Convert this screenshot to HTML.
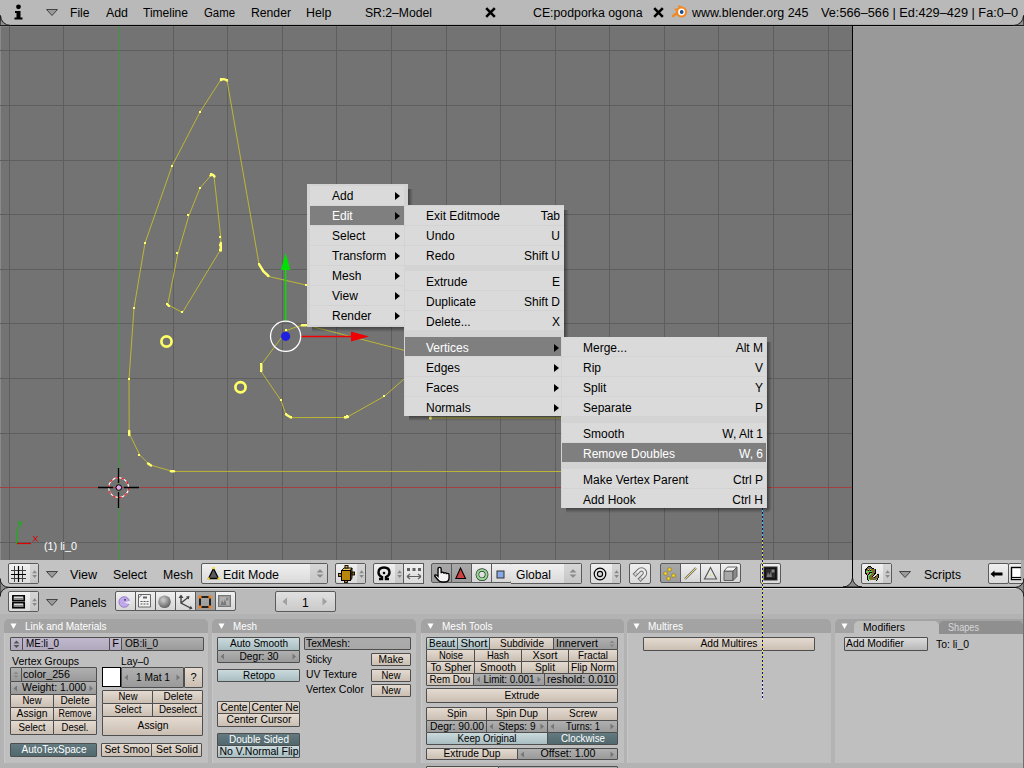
<!DOCTYPE html><html><head><meta charset="utf-8"><style>
html,body{margin:0;padding:0;width:1024px;height:768px;overflow:hidden;background:#b3b3b3}
body>div,body>span,body>svg{position:absolute}
span{font-family:"Liberation Sans",sans-serif;white-space:nowrap}
</style></head><body>
<div style="left:0px;top:0px;width:1024px;height:25px;background:#b9b9b9"></div>
<div style="left:0px;top:24px;width:1024px;height:1px;background:#a9a9a9"></div>
<div style="left:0px;top:25px;width:1024px;height:1px;background:#000"></div>
<svg style="left:14px;top:4px" width="10" height="16"><circle cx="4.5" cy="2.8" r="2.4" fill="#000"/><path d="M1 7 H6.5 V13.5 H8.5 V15.5 H0.5 V13.5 H2.5 V9 H1 Z" fill="#000"/></svg>
<svg style="left:46px;top:9px" width="12" height="7"><path d="M0.5 0.5 L11.5 0.5 L6.0 6.5 Z" fill="#9a9a9a" stroke="#444" stroke-width="1"/></svg>
<span style="transform:scaleX(1.0081);transform-origin:0 0;left:70px;top:7px;font-size:12px;line-height:12px;color:#000;">File</span>
<span style="transform:scaleX(1.0300);transform-origin:0 0;left:106px;top:7px;font-size:12px;line-height:12px;color:#000;">Add</span>
<span style="transform:scaleX(1.0021);transform-origin:0 0;left:143px;top:7px;font-size:12px;line-height:12px;color:#000;">Timeline</span>
<span style="transform:scaleX(0.9484);transform-origin:0 0;left:204px;top:7px;font-size:12px;line-height:12px;color:#000;">Game</span>
<span style="transform:scaleX(1.0163);transform-origin:0 0;left:251px;top:7px;font-size:12px;line-height:12px;color:#000;">Render</span>
<span style="transform:scaleX(1.0329);transform-origin:0 0;left:306px;top:7px;font-size:12px;line-height:12px;color:#000;">Help</span>
<span style="transform:scaleX(1.0144);transform-origin:0 0;left:365px;top:7px;font-size:12px;line-height:12px;color:#000;">SR:2&#8211;Model</span>
<span style="transform:scaleX(1.0258);transform-origin:0 0;left:533px;top:7px;font-size:12px;line-height:12px;color:#000;">CE:podporka ogona</span>
<span style="transform:scaleX(1.0395);transform-origin:0 0;left:692px;top:7px;font-size:12px;line-height:12px;color:#000;">www.blender.org 245</span>
<span style="transform:scaleX(1.0607);transform-origin:0 0;left:821px;top:7px;font-size:12px;line-height:12px;color:#000;">Ve:566&#8211;566 | Ed:429&#8211;429 | Fa:0&#8211;0</span>
<svg style="left:485px;top:7px" width="11" height="11"><path d="M1.2 1.2 L9.8 9.8 M9.8 1.2 L1.2 9.8" stroke="#000" stroke-width="2.6"/></svg>
<svg style="left:653px;top:7px" width="11" height="11"><path d="M1.2 1.2 L9.8 9.8 M9.8 1.2 L1.2 9.8" stroke="#000" stroke-width="2.6"/></svg>
<svg style="left:671px;top:4px" width="18" height="16"><g stroke="#f08a24" stroke-linecap="round" fill="none"><path d="M2 12 L7.5 8" stroke-width="2.6"/><path d="M4.5 5.5 H9" stroke-width="2.2"/><path d="M8 2.5 L11.5 4" stroke-width="2.2"/></g><circle cx="10.5" cy="8" r="5.6" fill="#f08a24"/><circle cx="10.5" cy="8" r="3.4" fill="#fff"/><circle cx="10.7" cy="8" r="1.9" fill="#1a4c98"/></svg>
<svg style="left:0;top:26px" width="853" height="534" viewBox="0 26 853 534">
<rect x="0" y="26" width="853" height="534" fill="#737373"/>
<rect x="0" y="26" width="853" height="1" fill="#838383"/>
<rect x="0" y="26" width="1" height="534" fill="#8a8a8a"/>
<path d="M9.5 26V560 M63.5 26V560 M173.5 26V560 M227.5 26V560 M282.5 26V560 M336.5 26V560 M391.5 26V560 M446.5 26V560 M500.5 26V560 M555.5 26V560 M609.5 26V560 M664.5 26V560 M718.5 26V560 M773.5 26V560 M828.5 26V560 M0 50.5H852 M0 105.5H852 M0 160.5H852 M0 214.5H852 M0 269.5H852 M0 323.5H852 M0 378.5H852 M0 433.5H852 M0 542.5H852" stroke="#5e5e5e" stroke-width="1" fill="none" shape-rendering="crispEdges"/>
<path d="M118.5 26V560" stroke="#3a9a3a" shape-rendering="crispEdges"/>
<path d="M0 487.5H852" stroke="#a04040" shape-rendering="crispEdges"/>
<g fill="none" stroke="#bdb634" stroke-width="1">
<path d="M562.0 471.5 L172.6 471.4 L149.6 464.8 L139.8 455.0 L129.2 433.4 L129.0 379.0 L134.0 308.0 L145.0 243.0 L172.0 166.0 L200.0 112.0 L221.0 79.5 L227.0 80.3 L259.0 264.0 L263.8 271.7 L268.4 276.4 L306.0 285.0 L420.0 313.0"/><path d="M214.0 176.0 L220.8 237.3 L220.8 245.0 L220.0 250.6 L182.5 312.5 L167.7 304.7 L177.8 253.8 L188.8 215.8 L200.0 188.0 L211.4 174.8 L214.0 176.0"/><path d="M420.0 372.0 L404.0 379.0 L384.7 396.0 L347.6 416.9 L345.3 417.5 L291.0 417.6 L286.0 414.8 L281.2 400.8 L261.2 371.5 L261.2 364.8 L286.7 330.5 L296.0 327.0 L305.0 325.0 L330.0 325.0"/><path d="M310.0 326.0 L403.0 350.0 L420.0 355.0"/><path d="M430.8 418.0 L565.0 418.0"/>
</g>
<g fill="#ffff70" shape-rendering="crispEdges"><rect x="171" y="470" width="2" height="2"/><rect x="148" y="463" width="2" height="2"/><rect x="138" y="454" width="2" height="2"/><rect x="128" y="432" width="2" height="2"/><rect x="128" y="378" width="2" height="2"/><rect x="133" y="307" width="2" height="2"/><rect x="144" y="242" width="2" height="2"/><rect x="171" y="165" width="2" height="2"/><rect x="199" y="111" width="2" height="2"/><rect x="220" y="78" width="2" height="2"/><rect x="226" y="79" width="2" height="2"/><rect x="258" y="263" width="2" height="2"/><rect x="262" y="270" width="2" height="2"/><rect x="267" y="275" width="2" height="2"/><rect x="305" y="284" width="2" height="2"/><rect x="219" y="236" width="2" height="2"/><rect x="219" y="244" width="2" height="2"/><rect x="219" y="249" width="2" height="2"/><rect x="181" y="311" width="2" height="2"/><rect x="166" y="303" width="2" height="2"/><rect x="176" y="252" width="2" height="2"/><rect x="187" y="214" width="2" height="2"/><rect x="199" y="187" width="2" height="2"/><rect x="210" y="173" width="2" height="2"/><rect x="213" y="175" width="2" height="2"/><rect x="383" y="395" width="2" height="2"/><rect x="346" y="415" width="2" height="2"/><rect x="344" y="416" width="2" height="2"/><rect x="290" y="416" width="2" height="2"/><rect x="285" y="413" width="2" height="2"/><rect x="280" y="399" width="2" height="2"/><rect x="260" y="370" width="2" height="2"/><rect x="260" y="363" width="2" height="2"/><rect x="285" y="329" width="2" height="2"/><rect x="302" y="324" width="2" height="2"/><rect x="305" y="324" width="2" height="2"/><rect x="429" y="417" width="2" height="2"/></g>
<g fill="none" stroke="#ffff70" stroke-width="2.4" stroke-linecap="round">
<path d="M221 80 Q224 78 227 80.5"/><path d="M210.5 175.5 Q212.5 173.5 214.5 176.5"/>
<path d="M259.5 265 L263.5 271.5 L268.5 276"/><path d="M220.8 243 V250.5"/>
<path d="M129.2 431 V435"/><path d="M148 463.5 L151 465.5"/><path d="M171 471.3 H174"/>
<path d="M261.3 364.5 V371"/><path d="M286 414.5 L291 417.6"/><path d="M345 417.5 L348 416.8"/>
<path d="M302 325.3 H306"/><path d="M430.5 417.5 V418.5"/><path d="M167.5 304.5 L169 306"/>
</g>
<circle cx="166.5" cy="341.5" r="5.1" fill="none" stroke="#ffff66" stroke-width="2.7"/>
<circle cx="240.5" cy="387.3" r="5.1" fill="none" stroke="#ffff66" stroke-width="2.7"/>
<!-- manipulator -->
<path d="M285.6 321V268" stroke="#00e000" stroke-width="1.6"/>
<path d="M280.8 270 L285.6 253 L290.4 270 Z" fill="#00e000"/>
<path d="M301 336.5H352" stroke="#f00000" stroke-width="1.6"/>
<path d="M351 331.5 L369 336.5 L351 341.5 Z" fill="#f00000"/>
<circle cx="285.6" cy="336.3" r="15.1" fill="none" stroke="#fff" stroke-width="1.3"/>
<circle cx="285.6" cy="336.3" r="4.6" fill="#2020e0"/>
<!-- 3d cursor -->
<circle cx="118.6" cy="487.6" r="10" fill="none" stroke="#fff" stroke-width="1.1"/>
<circle cx="118.6" cy="487.6" r="10" fill="none" stroke="#f01010" stroke-width="1.1" stroke-dasharray="3.1 3.1"/>
<path d="M118.5 468V483 M118.5 492V508 M98 487.5H113 M124 487.5H139" stroke="#000" stroke-width="1.3"/>
<circle cx="118.8" cy="487.6" r="2.8" fill="#e0a8e8" stroke="#000" stroke-width="1"/>
<!-- axis widget -->
<path d="M16.5 529V543.5H31" fill="none" stroke="#00c000" stroke-width="1"/>
<path d="M17 543.5H31" stroke="#e00000" stroke-width="1.2"/>
<path d="M18 521 L20 525 M22 521 L18.5 529" stroke="#00c000" stroke-width="1"/>
<path d="M33 536 L37.5 541.5 M37.5 536 L33 541.5" stroke="#e00000" stroke-width="1"/>
<!-- dotted line -->

</svg>
<span style="transform:scaleX(0.9814);transform-origin:0 0;left:44px;top:541px;font-size:11px;line-height:11px;color:#fff;">(1) li_0</span>
<div style="left:852px;top:26px;width:1px;height:534px;background:#000"></div>
<div style="left:853px;top:26px;width:171px;height:534px;background:#999999"></div>
<div style="left:853px;top:26px;width:171px;height:1px;background:#a6a6a6"></div>
<div style="left:0px;top:560px;width:852px;height:27px;background:#c3c3c3"></div>
<div style="left:853px;top:560px;width:171px;height:27px;background:#c3c3c3"></div>
<div style="left:0px;top:586px;width:1024px;height:1px;background:#a8a8a8"></div>
<div style="left:852px;top:560px;width:1px;height:27px;background:#000"></div>
<div style="left:0px;top:587px;width:1024px;height:1px;background:#000"></div>
<div style="left:0px;top:588px;width:1024px;height:26px;background:#bababa"></div>
<div style="left:0px;top:588px;width:1024px;height:1px;background:#dcdcdc"></div>
<div style="left:0px;top:614px;width:1024px;height:154px;background:#b3b3b3"></div>
<div style="left:8px;top:563px;width:29px;height:19px;border:1px solid #5a5a5a;border-radius:2px;background:linear-gradient(#f2f2f2,#dcdcdc);"></div>
<div style="left:30px;top:564px;width:8px;height:19px;background:linear-gradient(#d6d6d6,#c4c4c4)"></div>
<svg style="left:11px;top:566px" width="16" height="16"><path d="M3.5 0V16 M11.5 0V16 M0 4.5H15 M0 12.5H15" stroke="#404040" stroke-width="1"/><path d="M7.5 0V16 M0 8.5H15" stroke="#000" stroke-width="1.2"/></svg>
<svg style="left:32px;top:570px" width="6" height="9"><path d="M0.2 3.2 L2.6 0.2 L5 3.2 Z M0.2 5 L2.6 8 L5 5 Z" fill="#8a8a8a"/></svg>
<svg style="left:46px;top:571px" width="12" height="7"><path d="M0.5 0.5 L11.5 0.5 L6.0 6.5 Z" fill="#9a9a9a" stroke="#444" stroke-width="1"/></svg>
<span style="transform:scaleX(1.0466);transform-origin:0 0;left:70px;top:569px;font-size:12px;line-height:12px;color:#000;">View</span>
<span style="transform:scaleX(1.0192);transform-origin:0 0;left:113px;top:569px;font-size:12px;line-height:12px;color:#000;">Select</span>
<span style="transform:scaleX(1.0224);transform-origin:0 0;left:163px;top:569px;font-size:12px;line-height:12px;color:#000;">Mesh</span>
<div style="left:201px;top:563px;width:125px;height:19px;border:1px solid #5a5a5a;border-radius:2px;background:linear-gradient(#f0f0f0,#dadada);"></div>
<div style="left:310px;top:564px;width:17px;height:19px;background:linear-gradient(#d6d6d6,#c6c6c6)"></div>
<svg style="left:316px;top:569px" width="9" height="10"><path d="M0.5 3.5 L4 0.2 L7.5 3.5 Z M0.5 5.5 L4 8.8 L7.5 5.5 Z" fill="#8a8a8a"/></svg>
<svg style="left:207px;top:567px" width="14" height="14"><path d="M6.5 1.5 L1.5 11.5 H11.5 Z" fill="#5a5a5a" stroke="#000" stroke-width="1.3"/><rect x="5.5" y="0" width="2.2" height="2.2" fill="#ffe020"/><rect x="0.5" y="10.5" width="2.2" height="2.2" fill="#ffe020"/><rect x="10.5" y="10.5" width="2.2" height="2.2" fill="#ffe020"/></svg>
<span style="transform:scaleX(1.0364);transform-origin:0 0;left:223px;top:569px;font-size:12px;line-height:12px;color:#000;">Edit Mode</span>
<div style="left:335px;top:563px;width:29px;height:19px;border:1px solid #5a5a5a;border-radius:2px;background:linear-gradient(#f0f0f0,#dadada);"></div>
<div style="left:357px;top:564px;width:8px;height:19px;background:linear-gradient(#d6d6d6,#c6c6c6)"></div>
<svg style="left:359px;top:570px" width="6" height="9"><path d="M0.2 3.2 L2.6 0.2 L5 3.2 Z M0.2 5 L2.6 8 L5 5 Z" fill="#8a8a8a"/></svg>
<svg style="left:338px;top:565px" width="17" height="18"><path d="M3.5 5.5 L6 3 H14 L12.5 5.5 Z" fill="#f0d070" stroke="#000" stroke-width="0.9"/><path d="M12.5 5.5 L14 3 V13 L12.5 15.5 Z" fill="#8a6008" stroke="#000" stroke-width="0.9"/><rect x="3.5" y="5.5" width="9" height="10" fill="#b8860b" stroke="#000" stroke-width="1"/><rect x="7" y="0.5" width="3" height="2.5" fill="#e0b040" stroke="#000" stroke-width="0.9"/><rect x="0.5" y="8.5" width="3" height="3" fill="#b8860b" stroke="#000" stroke-width="0.9"/><rect x="14" y="7" width="2.5" height="3" fill="#8a6008" stroke="#000" stroke-width="0.9"/><rect x="6.5" y="15.5" width="3" height="2" fill="#b8860b" stroke="#000" stroke-width="0.9"/></svg>
<div style="left:373px;top:563px;width:29px;height:19px;border:1px solid #5a5a5a;border-radius:2px;background:linear-gradient(#f0f0f0,#dadada);"></div>
<div style="left:395px;top:564px;width:8px;height:19px;background:linear-gradient(#d6d6d6,#c6c6c6)"></div>
<svg style="left:397px;top:570px" width="6" height="9"><path d="M0.2 3.2 L2.6 0.2 L5 3.2 Z M0.2 5 L2.6 8 L5 5 Z" fill="#8a8a8a"/></svg>
<svg style="left:376px;top:566px" width="16" height="15"><path d="M3 13 H6 V11 Q2.5 9.5 2.5 6.5 Q2.5 1.5 8 1.5 Q13.5 1.5 13.5 6.5 Q13.5 9.5 10 11 V13 H13" fill="none" stroke="#000" stroke-width="2.4"/><circle cx="8" cy="7" r="1.3" fill="#000"/></svg>
<div style="left:403px;top:563px;width:19px;height:19px;border:1px solid #5a5a5a;border-radius:0px;background:linear-gradient(#f0f0f0,#dadada);"></div>
<svg style="left:405px;top:566px" width="18" height="15"><path d="M2 2h3v3h-3z M7.5 2h3v3h-3z M13 2h3v3h-3z" fill="#606060"/><path d="M2 10.5H16 M2 10.5 L5 8 M2 10.5 L5 13 M16 10.5 L13 8 M16 10.5 L13 13" stroke="#606060" stroke-width="1.2" fill="none"/></svg>
<div style="left:431px;top:563px;width:19px;height:18px;border:1px solid #5a5a5a;background:linear-gradient(#a8a8a8,#9c9c9c);border-radius:2px 0 0 2px;"></div>
<div style="left:451px;top:563px;width:19px;height:18px;border:1px solid #5a5a5a;background:linear-gradient(#a8a8a8,#9c9c9c);"></div>
<div style="left:471px;top:563px;width:19px;height:18px;border:1px solid #5a5a5a;background:linear-gradient(#f0f0f0,#d6d6d6);"></div>
<div style="left:491px;top:563px;width:19px;height:18px;border:1px solid #5a5a5a;background:linear-gradient(#f0f0f0,#d6d6d6);border-radius:0 2px 2px 0;"></div>
<svg style="left:433px;top:566px" width="18" height="18"><g transform="translate(0.3 0.3) scale(1.05)"><path d="M4.5 9 V2.5 Q4.5 1 6 1 Q7.5 1 7.5 2.5 V6.5 Q7.5 5.5 8.7 5.5 Q10 5.5 10 6.5 V7 Q10 6 11.2 6 Q12.5 6 12.5 7 V7.5 Q12.5 6.8 13.6 6.8 Q15 6.8 15 8 V11 Q15 15 11 15 H8.5 Q6.5 15 5 13.5 L1.5 9.5 Q1 8.5 2 8.2 Q3 8 4.5 9.5 Z" fill="#f4f4f4" stroke="#000" stroke-width="1.3"/></g></svg>
<svg style="left:455px;top:567px" width="12" height="13"><path d="M5.5 1 L10.5 11.5 H0.8 Z" fill="#d04040" stroke="#000" stroke-width="1.1"/></svg>
<svg style="left:475px;top:568px" width="14" height="14"><circle cx="7" cy="6.6" r="4.6" fill="none" stroke="#303030" stroke-width="3.6"/><circle cx="7" cy="6.6" r="4.6" fill="none" stroke="#90d890" stroke-width="2.2"/></svg>
<svg style="left:496px;top:570px" width="10" height="10"><rect x="1" y="1" width="7" height="7" fill="#88a8e8" stroke="#303030" stroke-width="1"/></svg>
<div style="left:511px;top:563px;width:70px;height:19px;border:1px solid #5a5a5a;border-left:0;border-radius:0 2px 2px 0;background:linear-gradient(#f0f0f0,#dadada)"></div>
<div style="left:564px;top:564px;width:17px;height:19px;background:linear-gradient(#d6d6d6,#c6c6c6)"></div>
<svg style="left:569px;top:569px" width="9" height="10"><path d="M0.5 3.5 L4 0.2 L7.5 3.5 Z M0.5 5.5 L4 8.8 L7.5 5.5 Z" fill="#8a8a8a"/></svg>
<span style="transform:scaleX(1.0090);transform-origin:0 0;left:516px;top:569px;font-size:12px;line-height:12px;color:#000;">Global</span>
<div style="left:590px;top:563px;width:29px;height:19px;border:1px solid #5a5a5a;border-radius:2px;background:linear-gradient(#f0f0f0,#dadada);"></div>
<div style="left:612px;top:564px;width:8px;height:19px;background:linear-gradient(#d6d6d6,#c6c6c6)"></div>
<svg style="left:614px;top:570px" width="6" height="9"><path d="M0.2 3.2 L2.6 0.2 L5 3.2 Z M0.2 5 L2.6 8 L5 5 Z" fill="#8a8a8a"/></svg>
<svg style="left:592px;top:566px" width="17" height="17"><circle cx="8" cy="8" r="5.8" fill="none" stroke="#000" stroke-width="1.2"/><circle cx="8" cy="8" r="2.6" fill="#d8d8d8" stroke="#000" stroke-width="1.1"/></svg>
<div style="left:629px;top:563px;width:20px;height:19px;border:1px solid #5a5a5a;border-radius:2px;background:linear-gradient(#f0f0f0,#dadada);"></div>
<svg style="left:632px;top:566px" width="17" height="17"><g transform="translate(9.5 7) rotate(45)"><path d="M-3.5 7 V0 A3.5 3.5 0 0 1 3.5 0 V7" fill="none" stroke="#707070" stroke-width="4.4"/><path d="M-3.5 6.4 V0 A3.5 3.5 0 0 1 3.5 0 V6.4" fill="none" stroke="#ececec" stroke-width="2.4"/><path d="M-3.5 3.5 V6.4 M3.5 3.5 V6.4" stroke="#a0a0a0" stroke-width="2.4" stroke-dasharray="1 1"/></g></svg>
<div style="left:660px;top:563px;width:19px;height:18px;border:1px solid #5a5a5a;background:linear-gradient(#a8a8a8,#9c9c9c);border-radius:2px 0 0 2px;"></div>
<div style="left:680px;top:563px;width:19px;height:18px;border:1px solid #5a5a5a;background:linear-gradient(#f0f0f0,#d6d6d6);"></div>
<div style="left:700px;top:563px;width:19px;height:18px;border:1px solid #5a5a5a;background:linear-gradient(#f0f0f0,#d6d6d6);"></div>
<div style="left:720px;top:563px;width:19px;height:18px;border:1px solid #5a5a5a;background:linear-gradient(#f0f0f0,#d6d6d6);border-radius:0 2px 2px 0;"></div>
<svg style="left:663px;top:566px" width="15" height="15"><rect x="5" y="2" width="3" height="3" fill="#ffe020" stroke="#806a00" stroke-width="0.5"/><rect x="1" y="6" width="3" height="3" fill="#ffe020" stroke="#806a00" stroke-width="0.5"/><rect x="9" y="8" width="3" height="3" fill="#ffe020" stroke="#806a00" stroke-width="0.5"/><rect x="4" y="11" width="3" height="3" fill="#ffe020" stroke="#806a00" stroke-width="0.5"/></svg>
<svg style="left:683px;top:566px" width="15" height="15"><path d="M2 13 L13 2" stroke="#777" stroke-width="2.4"/><path d="M2 13 L13 2" stroke="#e8d860" stroke-width="1"/></svg>
<svg style="left:703px;top:566px" width="15" height="15"><path d="M7.5 1.5 L13.5 13 H1.5 Z" fill="none" stroke="#555" stroke-width="1.1"/><circle cx="7.5" cy="9" r="0.8" fill="#dddd40"/></svg>
<svg style="left:722px;top:565px" width="17" height="17"><path d="M2 6 H11 V15.5 H2 Z" fill="#a8a8a8" stroke="#555" stroke-width="0.9"/><path d="M2 6 L5.5 2 H15 L11 6 Z" fill="#f4f4f4" stroke="#555" stroke-width="0.9"/><path d="M11 6 L15 2 V11.5 L11 15.5 Z" fill="#8a8a8a" stroke="#555" stroke-width="0.9"/></svg>
<div style="left:760px;top:563px;width:19px;height:19px;border:1px solid #5a5a5a;border-radius:2px;background:linear-gradient(#f0f0f0,#dadada);"></div>
<svg style="left:763px;top:566px" width="15" height="15"><rect x="1" y="1" width="13" height="13" fill="#111" stroke="#333"/><rect x="3" y="3" width="9" height="9" fill="#2a2a2a"/><path d="M3.5 11 L5 6 L6.5 9 L8 5 L9 11 Z" fill="#777"/><rect x="8.5" y="3.5" width="3" height="3" fill="#888"/></svg>
<div style="left:861px;top:563px;width:29px;height:19px;border:1px solid #5a5a5a;border-radius:2px;background:linear-gradient(#f0f0f0,#dadada);"></div>
<div style="left:883px;top:564px;width:8px;height:19px;background:linear-gradient(#d6d6d6,#c6c6c6)"></div>
<svg style="left:885px;top:570px" width="6" height="9"><path d="M0.2 3.2 L2.6 0.2 L5 3.2 Z M0.2 5 L2.6 8 L5 5 Z" fill="#8a8a8a"/></svg>
<svg style="left:865px;top:566px" width="14" height="15" shape-rendering="crispEdges"><rect x="3" y="0" width="1" height="1" fill="#000"/><rect x="4" y="0" width="1" height="1" fill="#000"/><rect x="5" y="0" width="1" height="1" fill="#000"/><rect x="2" y="1" width="1" height="1" fill="#000"/><rect x="3" y="1" width="1" height="1" fill="#7a6a30"/><rect x="4" y="1" width="1" height="1" fill="#7a6a30"/><rect x="5" y="1" width="1" height="1" fill="#7a6a30"/><rect x="6" y="1" width="1" height="1" fill="#000"/><rect x="1" y="2" width="1" height="1" fill="#000"/><rect x="2" y="2" width="1" height="1" fill="#7a6a30"/><rect x="3" y="2" width="1" height="1" fill="#4848c8"/><rect x="4" y="2" width="1" height="1" fill="#7a6a30"/><rect x="5" y="2" width="1" height="1" fill="#4848c8"/><rect x="6" y="2" width="1" height="1" fill="#7a6a30"/><rect x="7" y="2" width="1" height="1" fill="#000"/><rect x="8" y="2" width="1" height="1" fill="#000"/><rect x="0" y="3" width="1" height="1" fill="#000"/><rect x="1" y="3" width="1" height="1" fill="#000"/><rect x="2" y="3" width="1" height="1" fill="#7a6a30"/><rect x="3" y="3" width="1" height="1" fill="#e8e040"/><rect x="4" y="3" width="1" height="1" fill="#7a6a30"/><rect x="5" y="3" width="1" height="1" fill="#e8e040"/><rect x="6" y="3" width="1" height="1" fill="#7a6a30"/><rect x="7" y="3" width="1" height="1" fill="#7a6a30"/><rect x="8" y="3" width="1" height="1" fill="#7a6a30"/><rect x="9" y="3" width="1" height="1" fill="#7a6a30"/><rect x="10" y="3" width="1" height="1" fill="#000"/><rect x="0" y="4" width="1" height="1" fill="#000"/><rect x="1" y="4" width="1" height="1" fill="#7a6a30"/><rect x="2" y="4" width="1" height="1" fill="#7a6a30"/><rect x="3" y="4" width="1" height="1" fill="#000"/><rect x="4" y="4" width="1" height="1" fill="#7a6a30"/><rect x="5" y="4" width="1" height="1" fill="#000"/><rect x="6" y="4" width="1" height="1" fill="#7a6a30"/><rect x="7" y="4" width="1" height="1" fill="#7a6a30"/><rect x="8" y="4" width="1" height="1" fill="#7a6a30"/><rect x="9" y="4" width="1" height="1" fill="#7a6a30"/><rect x="10" y="4" width="1" height="1" fill="#000"/><rect x="0" y="5" width="1" height="1" fill="#000"/><rect x="1" y="5" width="1" height="1" fill="#60d060"/><rect x="2" y="5" width="1" height="1" fill="#60d060"/><rect x="3" y="5" width="1" height="1" fill="#60d060"/><rect x="4" y="5" width="1" height="1" fill="#60d060"/><rect x="5" y="5" width="1" height="1" fill="#60d060"/><rect x="6" y="5" width="1" height="1" fill="#60d060"/><rect x="7" y="5" width="1" height="1" fill="#7a6a30"/><rect x="8" y="5" width="1" height="1" fill="#7a6a30"/><rect x="9" y="5" width="1" height="1" fill="#7a6a30"/><rect x="10" y="5" width="1" height="1" fill="#000"/><rect x="0" y="6" width="1" height="1" fill="#000"/><rect x="1" y="6" width="1" height="1" fill="#60d060"/><rect x="2" y="6" width="1" height="1" fill="#60d060"/><rect x="3" y="6" width="1" height="1" fill="#e06060"/><rect x="4" y="6" width="1" height="1" fill="#000"/><rect x="5" y="6" width="1" height="1" fill="#000"/><rect x="6" y="6" width="1" height="1" fill="#000"/><rect x="7" y="6" width="1" height="1" fill="#7a6a30"/><rect x="8" y="6" width="1" height="1" fill="#7a6a30"/><rect x="9" y="6" width="1" height="1" fill="#7a6a30"/><rect x="10" y="6" width="1" height="1" fill="#000"/><rect x="0" y="7" width="1" height="1" fill="#000"/><rect x="1" y="7" width="1" height="1" fill="#000"/><rect x="2" y="7" width="1" height="1" fill="#e06060"/><rect x="3" y="7" width="1" height="1" fill="#e06060"/><rect x="4" y="7" width="1" height="1" fill="#000"/><rect x="5" y="7" width="1" height="1" fill="#60d060"/><rect x="6" y="7" width="1" height="1" fill="#60d060"/><rect x="7" y="7" width="1" height="1" fill="#7a6a30"/><rect x="8" y="7" width="1" height="1" fill="#7a6a30"/><rect x="9" y="7" width="1" height="1" fill="#000"/><rect x="10" y="7" width="1" height="1" fill="#000"/><rect x="1" y="8" width="1" height="1" fill="#000"/><rect x="2" y="8" width="1" height="1" fill="#e06060"/><rect x="3" y="8" width="1" height="1" fill="#000"/><rect x="4" y="8" width="1" height="1" fill="#60d060"/><rect x="5" y="8" width="1" height="1" fill="#60d060"/><rect x="6" y="8" width="1" height="1" fill="#7a6a30"/><rect x="7" y="8" width="1" height="1" fill="#7a6a30"/><rect x="8" y="8" width="1" height="1" fill="#7a6a30"/><rect x="9" y="8" width="1" height="1" fill="#000"/><rect x="12" y="8" width="1" height="1" fill="#000"/><rect x="13" y="8" width="1" height="1" fill="#000"/><rect x="2" y="9" width="1" height="1" fill="#000"/><rect x="3" y="9" width="1" height="1" fill="#60d060"/><rect x="4" y="9" width="1" height="1" fill="#60d060"/><rect x="5" y="9" width="1" height="1" fill="#7a6a30"/><rect x="6" y="9" width="1" height="1" fill="#7a6a30"/><rect x="7" y="9" width="1" height="1" fill="#7a6a30"/><rect x="8" y="9" width="1" height="1" fill="#000"/><rect x="11" y="9" width="1" height="1" fill="#7a6a30"/><rect x="12" y="9" width="1" height="1" fill="#7a6a30"/><rect x="13" y="9" width="1" height="1" fill="#000"/><rect x="2" y="10" width="1" height="1" fill="#000"/><rect x="3" y="10" width="1" height="1" fill="#60d060"/><rect x="4" y="10" width="1" height="1" fill="#7a6a30"/><rect x="5" y="10" width="1" height="1" fill="#7a6a30"/><rect x="6" y="10" width="1" height="1" fill="#7a6a30"/><rect x="7" y="10" width="1" height="1" fill="#000"/><rect x="10" y="10" width="1" height="1" fill="#000"/><rect x="11" y="10" width="1" height="1" fill="#7a6a30"/><rect x="12" y="10" width="1" height="1" fill="#7a6a30"/><rect x="13" y="10" width="1" height="1" fill="#000"/><rect x="2" y="11" width="1" height="1" fill="#000"/><rect x="3" y="11" width="1" height="1" fill="#60d060"/><rect x="4" y="11" width="1" height="1" fill="#7a6a30"/><rect x="5" y="11" width="1" height="1" fill="#7a6a30"/><rect x="6" y="11" width="1" height="1" fill="#7a6a30"/><rect x="7" y="11" width="1" height="1" fill="#7a6a30"/><rect x="8" y="11" width="1" height="1" fill="#7a6a30"/><rect x="9" y="11" width="1" height="1" fill="#000"/><rect x="10" y="11" width="1" height="1" fill="#7a6a30"/><rect x="11" y="11" width="1" height="1" fill="#7a6a30"/><rect x="12" y="11" width="1" height="1" fill="#7a6a30"/><rect x="13" y="11" width="1" height="1" fill="#000"/><rect x="2" y="12" width="1" height="1" fill="#000"/><rect x="3" y="12" width="1" height="1" fill="#60d060"/><rect x="4" y="12" width="1" height="1" fill="#7a6a30"/><rect x="5" y="12" width="1" height="1" fill="#7a6a30"/><rect x="6" y="12" width="1" height="1" fill="#7a6a30"/><rect x="7" y="12" width="1" height="1" fill="#7a6a30"/><rect x="8" y="12" width="1" height="1" fill="#7a6a30"/><rect x="9" y="12" width="1" height="1" fill="#7a6a30"/><rect x="10" y="12" width="1" height="1" fill="#7a6a30"/><rect x="11" y="12" width="1" height="1" fill="#7a6a30"/><rect x="12" y="12" width="1" height="1" fill="#000"/><rect x="2" y="13" width="1" height="1" fill="#000"/><rect x="3" y="13" width="1" height="1" fill="#60d060"/><rect x="4" y="13" width="1" height="1" fill="#60d060"/><rect x="5" y="13" width="1" height="1" fill="#7a6a30"/><rect x="6" y="13" width="1" height="1" fill="#7a6a30"/><rect x="7" y="13" width="1" height="1" fill="#7a6a30"/><rect x="8" y="13" width="1" height="1" fill="#7a6a30"/><rect x="9" y="13" width="1" height="1" fill="#7a6a30"/><rect x="10" y="13" width="1" height="1" fill="#7a6a30"/><rect x="11" y="13" width="1" height="1" fill="#60d060"/><rect x="12" y="13" width="1" height="1" fill="#000"/><rect x="3" y="14" width="1" height="1" fill="#000"/><rect x="11" y="14" width="1" height="1" fill="#000"/></svg>
<svg style="left:899px;top:571px" width="12" height="7"><path d="M0.5 0.5 L11.5 0.5 L6.0 6.5 Z" fill="#9a9a9a" stroke="#444" stroke-width="1"/></svg>
<span style="transform:scaleX(1.0085);transform-origin:0 0;left:924px;top:569px;font-size:12px;line-height:12px;color:#000;">Scripts</span>
<div style="left:988px;top:563px;width:19px;height:19px;border:1px solid #5a5a5a;border-radius:2px;background:linear-gradient(#f0f0f0,#dadada);"></div>
<svg style="left:990px;top:570px" width="13" height="9"><path d="M0.5 4 L4.5 0.5 V2.5 H12.5 V5.5 H4.5 V7.5 Z" fill="#000"/></svg>
<div style="left:1008px;top:563px;width:20px;height:19px;border:1px solid #5a5a5a;border-radius:2px;background:linear-gradient(#f0f0f0,#dadada);"></div>
<svg style="left:1010px;top:566px" width="12" height="16"><rect x="1.5" y="1.5" width="10" height="12" fill="#fff" stroke="#000" stroke-width="1.4"/><path d="M1 11.5H12" stroke="#000" stroke-width="1.2"/><path d="M2 12.5H12" stroke="#ddd" stroke-width="0.8"/></svg>
<div style="left:1021px;top:560px;width:3px;height:20px;background:#a9a9a9"></div>
<div style="left:8px;top:591px;width:29px;height:19px;border:1px solid #5a5a5a;border-radius:2px;background:linear-gradient(#f2f2f2,#dcdcdc);"></div>
<div style="left:30px;top:592px;width:8px;height:19px;background:linear-gradient(#d6d6d6,#c4c4c4)"></div>
<svg style="left:12px;top:595px" width="14" height="14"><rect x="0.8" y="0.8" width="11.5" height="5" fill="#888" stroke="#000" stroke-width="1.5"/><rect x="0.8" y="7.8" width="11.5" height="5" fill="#888" stroke="#000" stroke-width="1.5"/><path d="M2 2.2H11 M2 9.2H11" stroke="#fff" stroke-width="1"/></svg>
<svg style="left:32px;top:598px" width="6" height="9"><path d="M0.2 3.2 L2.6 0.2 L5 3.2 Z M0.2 5 L2.6 8 L5 5 Z" fill="#8a8a8a"/></svg>
<svg style="left:46px;top:599px" width="12" height="7"><path d="M0.5 0.5 L11.5 0.5 L6.0 6.5 Z" fill="#9a9a9a" stroke="#444" stroke-width="1"/></svg>
<span style="transform:scaleX(0.9945);transform-origin:0 0;left:70px;top:597px;font-size:12px;line-height:12px;color:#000;">Panels</span>
<div style="left:115px;top:591px;width:19px;height:18px;border:1px solid #5a5a5a;background:linear-gradient(#f0f0f0,#d6d6d6);border-radius:2px 0 0 2px;"></div>
<div style="left:135px;top:591px;width:19px;height:18px;border:1px solid #5a5a5a;background:linear-gradient(#f0f0f0,#d6d6d6);"></div>
<div style="left:155px;top:591px;width:19px;height:18px;border:1px solid #5a5a5a;background:linear-gradient(#f0f0f0,#d6d6d6);"></div>
<div style="left:175px;top:591px;width:19px;height:18px;border:1px solid #5a5a5a;background:linear-gradient(#f0f0f0,#d6d6d6);"></div>
<div style="left:195px;top:591px;width:19px;height:18px;border:1px solid #5a5a5a;background:linear-gradient(#a8a8a8,#9c9c9c);"></div>
<div style="left:215px;top:591px;width:19px;height:18px;border:1px solid #5a5a5a;background:linear-gradient(#f0f0f0,#d6d6d6);border-radius:0 2px 2px 0;"></div>
<svg style="left:118px;top:596px" width="13" height="12"><circle cx="6.2" cy="6" r="5.3" fill="#c0a8ec" stroke="#8a70b8" stroke-width="0.8"/><path d="M6.5 6.5 L12.5 4.5 V8.5 Z" fill="#eaeaea"/><circle cx="7" cy="3.8" r="0.9" fill="#333"/></svg>
<svg style="left:138px;top:594px" width="14" height="14"><path d="M0.5 0.5 H12.5 V13 H0.5 Z" fill="#f2f2f2" stroke="#666" stroke-width="1"/><path d="M0.5 4 L4 0.5" stroke="#666"/><path d="M2.5 7.5H11 M2.5 10H11" stroke="#555" stroke-width="1" stroke-dasharray="2 1"/><rect x="5" y="2.5" width="4" height="2" fill="#666"/></svg>
<svg style="left:157px;top:594px" width="15" height="15"><defs><radialGradient id="sph" cx="0.4" cy="0.35" r="0.7"><stop offset="0" stop-color="#d0d0d0"/><stop offset="0.6" stop-color="#8a8a8a"/><stop offset="1" stop-color="#5a5a5a"/></radialGradient></defs><circle cx="7.5" cy="7.8" r="6.3" fill="url(#sph)"/></svg>
<svg style="left:177px;top:594px" width="16" height="16"><path d="M4 2 V9 L14.5 14.5 M4 9 L11 3.5" fill="none" stroke="#444" stroke-width="1.4"/><path d="M1.5 4 L4 0.5 L6.5 4 Z M9 2.5 L12.5 2 L11.8 5.5 Z M12 15.5 L15.5 14.8 L13.8 11.8 Z" fill="#444"/></svg>
<svg style="left:197px;top:594px" width="16" height="16"><rect x="3" y="3" width="10" height="10" fill="none" stroke="#000" stroke-width="1.6"/><rect x="1.5" y="1.5" width="3" height="3" fill="#f08020"/><rect x="11.5" y="1.5" width="3" height="3" fill="#f08020"/><rect x="1.5" y="11.5" width="3" height="3" fill="#f08020"/><rect x="11.5" y="11.5" width="3" height="3" fill="#f08020"/></svg>
<svg style="left:218px;top:595px" width="14" height="13"><rect x="0.5" y="0.5" width="12" height="11" fill="#9a9a9a" stroke="#777"/><rect x="2" y="2" width="9" height="8" fill="#b0b0b0"/><path d="M2.5 10 L4 5 L5.5 8 L7 4 L8.5 10 Z" fill="#7a7a7a"/><rect x="8" y="2.5" width="2.5" height="3" fill="#888"/></svg>
<div style="left:275px;top:591px;width:59px;height:19px;border:1px solid #5a5a5a;border-radius:2px;background:linear-gradient(#e0e0e0,#cacaca);"></div>
<svg style="left:282px;top:597px" width="6" height="9"><path d="M5 0.5 L0.5 4.5 L5 8.5 Z" fill="#a0a0a0"/></svg>
<svg style="left:322px;top:597px" width="6" height="9"><path d="M0.5 0.5 L5 4.5 L0.5 8.5 Z" fill="#a0a0a0"/></svg>
<span style="left:302px;top:597px;font-size:12px;line-height:12px;color:#000;">1</span>
<div style="left:1023px;top:588px;width:1px;height:180px;background:#6e6e6e"></div>
<div style="left:4px;top:619px;width:204px;height:14px;background:#a3a3a3;border-radius:5px 5px 0 0"></div>
<div style="left:4px;top:633px;width:204px;height:130px;background:#bfbfbf"></div>
<div style="left:4px;top:633px;width:1px;height:130px;background:#c8c8c8"></div>
<svg style="left:10px;top:623px" width="8" height="7"><path d="M0.5 0.5 H6.5 L3.5 6 Z" fill="#fff"/></svg>
<span style="transform:scaleX(0.9128);transform-origin:0 0;left:25px;top:621px;font-size:11px;line-height:11px;color:#fff;">Link and Materials</span>
<div style="left:212px;top:619px;width:204px;height:14px;background:#a3a3a3;border-radius:5px 5px 0 0"></div>
<div style="left:212px;top:633px;width:204px;height:130px;background:#bfbfbf"></div>
<div style="left:212px;top:633px;width:1px;height:130px;background:#c8c8c8"></div>
<svg style="left:218px;top:623px" width="8" height="7"><path d="M0.5 0.5 H6.5 L3.5 6 Z" fill="#fff"/></svg>
<span style="transform:scaleX(0.8920);transform-origin:0 0;left:233px;top:621px;font-size:11px;line-height:11px;color:#fff;">Mesh</span>
<div style="left:421px;top:619px;width:203px;height:14px;background:#a3a3a3;border-radius:5px 5px 0 0"></div>
<div style="left:421px;top:633px;width:203px;height:130px;background:#bfbfbf"></div>
<div style="left:421px;top:633px;width:1px;height:130px;background:#c8c8c8"></div>
<svg style="left:427px;top:623px" width="8" height="7"><path d="M0.5 0.5 H6.5 L3.5 6 Z" fill="#fff"/></svg>
<span style="transform:scaleX(0.9109);transform-origin:0 0;left:442px;top:621px;font-size:11px;line-height:11px;color:#fff;">Mesh Tools</span>
<div style="left:627px;top:619px;width:204px;height:14px;background:#a3a3a3;border-radius:5px 5px 0 0"></div>
<div style="left:627px;top:633px;width:204px;height:130px;background:#bfbfbf"></div>
<div style="left:627px;top:633px;width:1px;height:130px;background:#c8c8c8"></div>
<svg style="left:633px;top:623px" width="8" height="7"><path d="M0.5 0.5 H6.5 L3.5 6 Z" fill="#fff"/></svg>
<span style="transform:scaleX(0.9087);transform-origin:0 0;left:648px;top:621px;font-size:11px;line-height:11px;color:#fff;">Multires</span>
<div style="left:835px;top:619px;width:188px;height:14px;background:#a3a3a3;border-radius:5px 0 0 0"></div>
<div style="left:835px;top:633px;width:188px;height:130px;background:#bfbfbf"></div>
<svg style="left:841px;top:623px" width="8" height="7"><path d="M0.5 0.5 H6.5 L3.5 6 Z" fill="#fff"/></svg>
<div style="left:854px;top:621px;width:85px;height:13px;background:#bfbfbf;border-radius:5px 5px 0 0"></div>
<div style="left:939px;top:621px;width:84px;height:13px;background:#8f8f8f;border-radius:5px 5px 0 0"></div>
<span style="transform:scaleX(0.9412);transform-origin:0 0;left:863px;top:622px;font-size:11px;line-height:11px;color:#000;">Modifiers</span>
<span style="transform:scaleX(0.8308);transform-origin:0 0;left:948px;top:622px;font-size:11px;line-height:11px;color:#d8d8d8;">Shapes</span>
<div style="left:10px;top:637px;width:11px;height:12px;border:1px solid #4e4e4e;border-radius:1px;background:linear-gradient(#c0b8cc,#b0a8bc)"></div>
<svg style="left:13px;top:640px" width="7" height="9"><path d="M0.5 3.5 L3.5 0.5 L6.5 3.5 Z M0.5 5 L3.5 8 L6.5 5 Z" fill="#555"/></svg>
<div style="left:22px;top:637px;width:86px;height:12px;border:1px solid #4e4e4e;border-radius:1px;background:linear-gradient(#c0b8cc,#b0a8bc)"></div>
<span style="transform:scaleX(0.8995);transform-origin:0 0;left:26px;top:638px;font-size:11px;line-height:11px;color:#000;">ME:li_0</span>
<div style="left:109px;top:637px;width:11px;height:12px;border:1px solid #4e4e4e;border-radius:1px;background:linear-gradient(#c0b8cc,#b0a8bc)"></div>
<span style="left:115.5px;transform:translateX(-50%);top:638px;font-size:11px;line-height:11px;color:#000;">F</span>
<div style="left:121px;top:637px;width:81px;height:12px;border:1px solid #4e4e4e;border-radius:1px;background:linear-gradient(#b0b0b0,#9a9a9a)"></div>
<span style="transform:scaleX(0.9147);transform-origin:0 0;left:125px;top:638px;font-size:11px;line-height:11px;color:#000;">OB:li_0</span>
<span style="transform:scaleX(0.9527);transform-origin:0 0;left:12px;top:656px;font-size:11px;line-height:11px;color:#000;">Vertex Groups</span>
<span style="transform:scaleX(0.9338);transform-origin:0 0;left:121px;top:656px;font-size:11px;line-height:11px;color:#000;">Lay&#8211;0</span>
<div style="left:10px;top:667px;width:10px;height:13px;border:1px solid #4e4e4e;border-radius:1px;background:linear-gradient(#b0b0b0,#9a9a9a)"></div>
<svg style="left:13px;top:671px" width="6" height="8"><path d="M0.5 3 L3 0.5 L5.5 3 Z M0.5 4.5 L3 7 L5.5 4.5 Z" fill="#888"/></svg>
<div style="left:21px;top:667px;width:74px;height:13px;border:1px solid #4e4e4e;border-radius:1px;background:linear-gradient(#b0b0b0,#9a9a9a)"></div>
<span style="transform:scaleX(0.9725);transform-origin:0 0;left:23px;top:669px;font-size:11px;line-height:11px;color:#000;">color_256</span>
<div style="left:10px;top:681px;width:85px;height:12px;border:1px solid #4e4e4e;border-radius:1px;background:linear-gradient(#b0b0b0,#9a9a9a)"></div>
<svg style="left:13px;top:684.5px" width="5" height="8"><path d="M4 0.5 L0.5 3.5 L4 6.5 Z" fill="#777"/></svg>
<svg style="left:89px;top:684.5px" width="5" height="8"><path d="M0.5 0.5 L4 3.5 L0.5 6.5 Z" fill="#777"/></svg>
<span style="left:53.5px;transform:translateX(-50%) scaleX(0.9455);top:682px;font-size:11px;line-height:11px;color:#000;">Weight: 1.000</span>
<div style="left:10px;top:694px;width:42px;height:12px;border:1px solid #4e4e4e;border-radius:1px;background:linear-gradient(#e4dad0,#cbbfb3)"></div>
<span style="left:32.0px;transform:translateX(-50%) scaleX(0.8630);top:695px;font-size:11px;line-height:11px;color:#000;">New</span>
<div style="left:53px;top:694px;width:42px;height:12px;border:1px solid #4e4e4e;border-radius:1px;background:linear-gradient(#e4dad0,#cbbfb3)"></div>
<span style="left:75.0px;transform:translateX(-50%) scaleX(0.9120);top:695px;font-size:11px;line-height:11px;color:#000;">Delete</span>
<div style="left:10px;top:707px;width:42px;height:12px;border:1px solid #4e4e4e;border-radius:1px;background:linear-gradient(#e4dad0,#cbbfb3)"></div>
<span style="left:32.0px;transform:translateX(-50%) scaleX(0.9385);top:708px;font-size:11px;line-height:11px;color:#000;">Assign</span>
<div style="left:53px;top:707px;width:42px;height:12px;border:1px solid #4e4e4e;border-radius:1px;background:linear-gradient(#e4dad0,#cbbfb3)"></div>
<span style="left:75.0px;transform:translateX(-50%) scaleX(0.8055);top:708px;font-size:11px;line-height:11px;color:#000;">Remove</span>
<div style="left:10px;top:720px;width:42px;height:13px;border:1px solid #4e4e4e;border-radius:1px;background:linear-gradient(#e4dad0,#cbbfb3)"></div>
<span style="left:32.0px;transform:translateX(-50%) scaleX(0.8830);top:722px;font-size:11px;line-height:11px;color:#000;">Select</span>
<div style="left:53px;top:720px;width:42px;height:13px;border:1px solid #4e4e4e;border-radius:1px;background:linear-gradient(#e4dad0,#cbbfb3)"></div>
<span style="left:75.0px;transform:translateX(-50%) scaleX(0.8657);top:722px;font-size:11px;line-height:11px;color:#000;">Desel.</span>
<div style="left:10px;top:743px;width:85px;height:12px;border:1px solid #4e4e4e;border-radius:1px;background:linear-gradient(#627a80,#51686d)"></div>
<span style="left:53.5px;transform:translateX(-50%) scaleX(0.9163);top:744px;font-size:11px;line-height:11px;color:#fff;">AutoTexSpace</span>
<div style="left:101px;top:743px;width:49px;height:12px;border:1px solid #4e4e4e;border-radius:1px;background:linear-gradient(#e4dad0,#cbbfb3)"></div>
<span style="left:126.5px;transform:translateX(-50%) scaleX(0.9314);top:744px;font-size:11px;line-height:11px;color:#000;">Set Smoo</span>
<div style="left:151px;top:743px;width:49px;height:12px;border:1px solid #4e4e4e;border-radius:1px;background:linear-gradient(#e4dad0,#cbbfb3)"></div>
<span style="left:176.5px;transform:translateX(-50%) scaleX(0.9539);top:744px;font-size:11px;line-height:11px;color:#000;">Set Solid</span>
<div style="left:102px;top:667px;width:17px;height:18px;border:1px solid #000;background:#fff"></div>
<div style="left:121px;top:667px;width:61px;height:19px;border:1px solid #4e4e4e;border-radius:1px;background:linear-gradient(#b0b0b0,#9a9a9a)"></div>
<svg style="left:124px;top:674.0px" width="5" height="8"><path d="M4 0.5 L0.5 3.5 L4 6.5 Z" fill="#777"/></svg>
<svg style="left:176px;top:674.0px" width="5" height="8"><path d="M0.5 0.5 L4 3.5 L0.5 6.5 Z" fill="#777"/></svg>
<span style="left:152.5px;transform:translateX(-50%) scaleX(0.9267);top:672px;font-size:11px;line-height:11px;color:#000;">1 Mat 1</span>
<div style="left:184px;top:667px;width:17px;height:19px;border:1px solid #4e4e4e;border-radius:1px;background:linear-gradient(#e4dad0,#cbbfb3)"></div>
<span style="left:193.5px;transform:translateX(-50%);top:672px;font-size:11px;line-height:11px;color:#000;">?</span>
<div style="left:102px;top:690px;width:49px;height:12px;border:1px solid #4e4e4e;border-radius:1px;background:linear-gradient(#e4dad0,#cbbfb3)"></div>
<span style="left:127.5px;transform:translateX(-50%) scaleX(0.8630);top:691px;font-size:11px;line-height:11px;color:#000;">New</span>
<div style="left:152px;top:690px;width:49px;height:12px;border:1px solid #4e4e4e;border-radius:1px;background:linear-gradient(#e4dad0,#cbbfb3)"></div>
<span style="left:177.5px;transform:translateX(-50%) scaleX(0.9120);top:691px;font-size:11px;line-height:11px;color:#000;">Delete</span>
<div style="left:102px;top:703px;width:49px;height:12px;border:1px solid #4e4e4e;border-radius:1px;background:linear-gradient(#e4dad0,#cbbfb3)"></div>
<span style="left:127.5px;transform:translateX(-50%) scaleX(0.8830);top:704px;font-size:11px;line-height:11px;color:#000;">Select</span>
<div style="left:152px;top:703px;width:49px;height:12px;border:1px solid #4e4e4e;border-radius:1px;background:linear-gradient(#e4dad0,#cbbfb3)"></div>
<span style="left:177.5px;transform:translateX(-50%) scaleX(0.8879);top:704px;font-size:11px;line-height:11px;color:#000;">Deselect</span>
<div style="left:102px;top:716px;width:99px;height:18px;border:1px solid #4e4e4e;border-radius:1px;background:linear-gradient(#e4dad0,#cbbfb3)"></div>
<span style="left:152.5px;transform:translateX(-50%) scaleX(0.9385);top:720px;font-size:11px;line-height:11px;color:#000;">Assign</span>
<div style="left:217px;top:637px;width:81px;height:12px;border:1px solid #4e4e4e;border-radius:1px;background:linear-gradient(#cadadd,#a9bdc0)"></div>
<span style="left:258.5px;transform:translateX(-50%) scaleX(0.9120);top:638px;font-size:11px;line-height:11px;color:#000;">Auto Smooth</span>
<div style="left:217px;top:650px;width:81px;height:11px;border:1px solid #4e4e4e;border-radius:1px;background:linear-gradient(#b0b0b0,#9a9a9a)"></div>
<svg style="left:220px;top:653.0px" width="5" height="8"><path d="M4 0.5 L0.5 3.5 L4 6.5 Z" fill="#777"/></svg>
<svg style="left:292px;top:653.0px" width="5" height="8"><path d="M0.5 0.5 L4 3.5 L0.5 6.5 Z" fill="#777"/></svg>
<span style="left:258.5px;transform:translateX(-50%) scaleX(0.9241);top:651px;font-size:11px;line-height:11px;color:#000;">Degr: 30</span>
<div style="left:217px;top:669px;width:81px;height:11px;border:1px solid #4e4e4e;border-radius:1px;background:linear-gradient(#cadadd,#a9bdc0)"></div>
<span style="left:258.5px;transform:translateX(-50%) scaleX(0.9018);top:670px;font-size:11px;line-height:11px;color:#000;">Retopo</span>
<div style="left:217px;top:701px;width:31px;height:11px;border:1px solid #4e4e4e;border-radius:1px;background:linear-gradient(#e4dad0,#cbbfb3)"></div>
<span style="left:233.5px;transform:translateX(-50%) scaleX(0.9196);top:702px;font-size:11px;line-height:11px;color:#000;">Cente</span>
<div style="left:249px;top:701px;width:49px;height:11px;border:1px solid #4e4e4e;border-radius:1px;background:linear-gradient(#e4dad0,#cbbfb3)"></div>
<span style="left:274.5px;transform:translateX(-50%) scaleX(0.9374);top:702px;font-size:11px;line-height:11px;color:#000;">Center Ne</span>
<div style="left:217px;top:713px;width:81px;height:12px;border:1px solid #4e4e4e;border-radius:1px;background:linear-gradient(#e4dad0,#cbbfb3)"></div>
<span style="left:258.5px;transform:translateX(-50%) scaleX(0.9410);top:714px;font-size:11px;line-height:11px;color:#000;">Center Cursor</span>
<div style="left:217px;top:733px;width:81px;height:11px;border:1px solid #4e4e4e;border-radius:1px;background:linear-gradient(#627a80,#51686d)"></div>
<span style="left:258.5px;transform:translateX(-50%) scaleX(0.9082);top:734px;font-size:11px;line-height:11px;color:#fff;">Double Sided</span>
<div style="left:217px;top:745px;width:81px;height:11px;border:1px solid #4e4e4e;border-radius:1px;background:linear-gradient(#cadadd,#a9bdc0)"></div>
<span style="left:258.5px;transform:translateX(-50%) scaleX(0.9549);top:746px;font-size:11px;line-height:11px;color:#000;">No V.Normal Flip</span>
<div style="left:304px;top:637px;width:105px;height:11px;border:1px solid #4e4e4e;border-radius:1px;background:linear-gradient(#acacac,#a8a8a8)"></div>
<span style="transform:scaleX(0.9346);transform-origin:0 0;left:306px;top:638px;font-size:11px;line-height:11px;color:#000;">TexMesh:</span>
<span style="transform:scaleX(0.8860);transform-origin:0 0;left:306px;top:654px;font-size:11px;line-height:11px;color:#000;">Sticky</span>
<div style="left:371px;top:653px;width:38px;height:11px;border:1px solid #4e4e4e;border-radius:1px;background:linear-gradient(#e4dad0,#cbbfb3)"></div>
<span style="left:391.0px;transform:translateX(-50%) scaleX(0.9292);top:654px;font-size:11px;line-height:11px;color:#000;">Make</span>
<span style="transform:scaleX(0.9406);transform-origin:0 0;left:306px;top:669px;font-size:11px;line-height:11px;color:#000;">UV Texture</span>
<div style="left:371px;top:669px;width:38px;height:11px;border:1px solid #4e4e4e;border-radius:1px;background:linear-gradient(#e4dad0,#cbbfb3)"></div>
<span style="left:391.0px;transform:translateX(-50%) scaleX(0.8630);top:670px;font-size:11px;line-height:11px;color:#000;">New</span>
<span style="transform:scaleX(0.9582);transform-origin:0 0;left:306px;top:684px;font-size:11px;line-height:11px;color:#000;">Vertex Color</span>
<div style="left:371px;top:684px;width:38px;height:11px;border:1px solid #4e4e4e;border-radius:1px;background:linear-gradient(#e4dad0,#cbbfb3)"></div>
<span style="left:391.0px;transform:translateX(-50%) scaleX(0.8630);top:685px;font-size:11px;line-height:11px;color:#000;">New</span>
<div style="left:426px;top:637px;width:30px;height:11px;border:1px solid #4e4e4e;border-radius:1px;background:linear-gradient(#cadadd,#a9bdc0)"></div>
<span style="left:442.0px;transform:translateX(-50%) scaleX(0.9043);top:638px;font-size:11px;line-height:11px;color:#000;">Beaut</span>
<div style="left:457px;top:637px;width:31px;height:11px;border:1px solid #4e4e4e;border-radius:1px;background:linear-gradient(#cadadd,#a9bdc0)"></div>
<span style="left:473.5px;transform:translateX(-50%) scaleX(1.0267);top:638px;font-size:11px;line-height:11px;color:#000;">Short</span>
<div style="left:489px;top:637px;width:63px;height:11px;border:1px solid #4e4e4e;border-radius:1px;background:linear-gradient(#e4dad0,#cbbfb3)"></div>
<span style="left:521.5px;transform:translateX(-50%) scaleX(0.9104);top:638px;font-size:11px;line-height:11px;color:#000;">Subdivide</span>
<div style="left:553px;top:637px;width:63px;height:11px;border:1px solid #4e4e4e;border-radius:1px;background:linear-gradient(#b0b0b0,#9a9a9a)"></div>
<span style="transform:scaleX(0.9673);transform-origin:0 0;left:556px;top:638px;font-size:11px;line-height:11px;color:#000;">Innervert</span>
<svg style="left:609px;top:640px" width="6" height="8"><path d="M0.5 3 L3 0.5 L5.5 3 Z M0.5 4.5 L3 7 L5.5 4.5 Z" fill="#888"/></svg>
<div style="left:426px;top:649px;width:47px;height:11px;border:1px solid #4e4e4e;border-radius:1px;background:linear-gradient(#e4dad0,#cbbfb3)"></div>
<span style="left:450.5px;transform:translateX(-50%) scaleX(0.8533);top:650px;font-size:11px;line-height:11px;color:#000;">Noise</span>
<div style="left:474px;top:649px;width:46px;height:11px;border:1px solid #4e4e4e;border-radius:1px;background:linear-gradient(#e4dad0,#cbbfb3)"></div>
<span style="left:498.0px;transform:translateX(-50%) scaleX(0.8564);top:650px;font-size:11px;line-height:11px;color:#000;">Hash</span>
<div style="left:521px;top:649px;width:46px;height:11px;border:1px solid #4e4e4e;border-radius:1px;background:linear-gradient(#e4dad0,#cbbfb3)"></div>
<span style="left:545.0px;transform:translateX(-50%) scaleX(0.9732);top:650px;font-size:11px;line-height:11px;color:#000;">Xsort</span>
<div style="left:568px;top:649px;width:48px;height:11px;border:1px solid #4e4e4e;border-radius:1px;background:linear-gradient(#e4dad0,#cbbfb3)"></div>
<span style="left:593.0px;transform:translateX(-50%) scaleX(0.8922);top:650px;font-size:11px;line-height:11px;color:#000;">Fractal</span>
<div style="left:426px;top:661px;width:47px;height:11px;border:1px solid #4e4e4e;border-radius:1px;background:linear-gradient(#e4dad0,#cbbfb3)"></div>
<span style="left:450.5px;transform:translateX(-50%) scaleX(0.9312);top:662px;font-size:11px;line-height:11px;color:#000;">To Spher</span>
<div style="left:474px;top:661px;width:46px;height:11px;border:1px solid #4e4e4e;border-radius:1px;background:linear-gradient(#e4dad0,#cbbfb3)"></div>
<span style="left:498.0px;transform:translateX(-50%) scaleX(0.9493);top:662px;font-size:11px;line-height:11px;color:#000;">Smooth</span>
<div style="left:521px;top:661px;width:46px;height:11px;border:1px solid #4e4e4e;border-radius:1px;background:linear-gradient(#e4dad0,#cbbfb3)"></div>
<span style="left:545.0px;transform:translateX(-50%) scaleX(0.9343);top:662px;font-size:11px;line-height:11px;color:#000;">Split</span>
<div style="left:568px;top:661px;width:48px;height:11px;border:1px solid #4e4e4e;border-radius:1px;background:linear-gradient(#e4dad0,#cbbfb3)"></div>
<span style="left:593.0px;transform:translateX(-50%) scaleX(0.9230);top:662px;font-size:11px;line-height:11px;color:#000;">Flip Norm</span>
<div style="left:426px;top:673px;width:46px;height:11px;border:1px solid #4e4e4e;border-radius:1px;background:linear-gradient(#e4dad0,#cbbfb3)"></div>
<span style="left:450.0px;transform:translateX(-50%) scaleX(0.8823);top:674px;font-size:11px;line-height:11px;color:#000;">Rem Dou</span>
<div style="left:473px;top:673px;width:70px;height:11px;border:1px solid #4e4e4e;border-radius:1px;background:linear-gradient(#b0b0b0,#9a9a9a)"></div>
<svg style="left:476px;top:676.0px" width="5" height="8"><path d="M4 0.5 L0.5 3.5 L4 6.5 Z" fill="#777"/></svg>
<svg style="left:537px;top:676.0px" width="5" height="8"><path d="M0.5 0.5 L4 3.5 L0.5 6.5 Z" fill="#777"/></svg>
<span style="left:509.0px;transform:translateX(-50%) scaleX(0.8967);top:674px;font-size:11px;line-height:11px;color:#000;">Limit: 0.001</span>
<div style="left:544px;top:673px;width:72px;height:11px;border:1px solid #4e4e4e;border-radius:1px;background:linear-gradient(#b0b0b0,#9a9a9a)"></div>
<span style="left:581.0px;transform:translateX(-50%) scaleX(0.9753);top:674px;font-size:11px;line-height:11px;color:#000;">reshold: 0.010</span>
<div style="left:426px;top:688px;width:190px;height:13px;border:1px solid #4e4e4e;border-radius:1px;background:linear-gradient(#e4dad0,#cbbfb3)"></div>
<span style="left:522.0px;transform:translateX(-50%) scaleX(0.9230);top:690px;font-size:11px;line-height:11px;color:#000;">Extrude</span>
<div style="left:426px;top:707px;width:59px;height:12px;border:1px solid #4e4e4e;border-radius:1px;background:linear-gradient(#e4dad0,#cbbfb3)"></div>
<span style="left:456.5px;transform:translateX(-50%) scaleX(0.9078);top:708px;font-size:11px;line-height:11px;color:#000;">Spin</span>
<div style="left:486px;top:707px;width:60px;height:12px;border:1px solid #4e4e4e;border-radius:1px;background:linear-gradient(#e4dad0,#cbbfb3)"></div>
<span style="left:517.0px;transform:translateX(-50%) scaleX(0.9279);top:708px;font-size:11px;line-height:11px;color:#000;">Spin Dup</span>
<div style="left:547px;top:707px;width:69px;height:12px;border:1px solid #4e4e4e;border-radius:1px;background:linear-gradient(#e4dad0,#cbbfb3)"></div>
<span style="left:582.5px;transform:translateX(-50%) scaleX(0.9162);top:708px;font-size:11px;line-height:11px;color:#000;">Screw</span>
<div style="left:426px;top:720px;width:59px;height:11px;border:1px solid #4e4e4e;border-radius:1px;background:linear-gradient(#b0b0b0,#9a9a9a)"></div>
<span style="left:456.5px;transform:translateX(-50%) scaleX(0.9394);top:721px;font-size:11px;line-height:11px;color:#000;">Degr: 90.00</span>
<div style="left:486px;top:720px;width:60px;height:11px;border:1px solid #4e4e4e;border-radius:1px;background:linear-gradient(#b0b0b0,#9a9a9a)"></div>
<svg style="left:489px;top:723.0px" width="5" height="8"><path d="M4 0.5 L0.5 3.5 L4 6.5 Z" fill="#777"/></svg>
<svg style="left:540px;top:723.0px" width="5" height="8"><path d="M0.5 0.5 L4 3.5 L0.5 6.5 Z" fill="#777"/></svg>
<span style="left:517.0px;transform:translateX(-50%) scaleX(0.9168);top:721px;font-size:11px;line-height:11px;color:#000;">Steps: 9</span>
<div style="left:547px;top:720px;width:69px;height:11px;border:1px solid #4e4e4e;border-radius:1px;background:linear-gradient(#b0b0b0,#9a9a9a)"></div>
<svg style="left:550px;top:723.0px" width="5" height="8"><path d="M4 0.5 L0.5 3.5 L4 6.5 Z" fill="#777"/></svg>
<svg style="left:610px;top:723.0px" width="5" height="8"><path d="M0.5 0.5 L4 3.5 L0.5 6.5 Z" fill="#777"/></svg>
<span style="left:582.5px;transform:translateX(-50%) scaleX(0.8510);top:721px;font-size:11px;line-height:11px;color:#000;">Turns: 1</span>
<div style="left:426px;top:732px;width:120px;height:11px;border:1px solid #4e4e4e;border-radius:1px;background:linear-gradient(#cadadd,#a9bdc0)"></div>
<span style="left:487.0px;transform:translateX(-50%) scaleX(0.8851);top:733px;font-size:11px;line-height:11px;color:#000;">Keep Original</span>
<div style="left:547px;top:732px;width:69px;height:11px;border:1px solid #4e4e4e;border-radius:1px;background:linear-gradient(#627a80,#51686d)"></div>
<span style="left:582.5px;transform:translateX(-50%) scaleX(0.8886);top:733px;font-size:11px;line-height:11px;color:#fff;">Clockwise</span>
<div style="left:426px;top:748px;width:90px;height:10px;border:1px solid #4e4e4e;border-radius:1px;background:linear-gradient(#e4dad0,#cbbfb3)"></div>
<span style="left:472.0px;transform:translateX(-50%) scaleX(0.9320);top:748px;font-size:11px;line-height:11px;color:#000;">Extrude Dup</span>
<div style="left:517px;top:748px;width:99px;height:10px;border:1px solid #4e4e4e;border-radius:1px;background:linear-gradient(#b0b0b0,#9a9a9a)"></div>
<svg style="left:520px;top:750.5px" width="5" height="8"><path d="M4 0.5 L0.5 3.5 L4 6.5 Z" fill="#777"/></svg>
<svg style="left:610px;top:750.5px" width="5" height="8"><path d="M0.5 0.5 L4 3.5 L0.5 6.5 Z" fill="#777"/></svg>
<span style="left:567.5px;transform:translateX(-50%) scaleX(0.9705);top:748px;font-size:11px;line-height:11px;color:#000;">Offset: 1.00</span>
<div style="left:426px;top:766px;width:71px;height:12px;border:1px solid #4e4e4e;border-radius:1px;background:linear-gradient(#e4dad0,#cbbfb3)"></div>
<div style="left:498px;top:766px;width:118px;height:12px;border:1px solid #4e4e4e;border-radius:1px;background:linear-gradient(#b0b0b0,#9a9a9a)"></div>
<div style="left:643px;top:637px;width:170px;height:12px;border:1px solid #4e4e4e;border-radius:1px;background:linear-gradient(#e4dad0,#cbbfb3)"></div>
<span style="left:729.0px;transform:translateX(-50%) scaleX(0.9323);top:638px;font-size:11px;line-height:11px;color:#000;">Add Multires</span>
<div style="left:844px;top:637px;width:82px;height:12px;border:1px solid #4e4e4e;border-radius:1px;background:linear-gradient(#dcdcdc,#b8b8b8)"></div>
<span style="transform:scaleX(0.9390);transform-origin:0 0;left:846px;top:638px;font-size:11px;line-height:11px;color:#000;">Add Modifier</span>
<span style="transform:scaleX(0.9467);transform-origin:0 0;left:936px;top:639px;font-size:11px;line-height:11px;color:#000;">To: li_0</span>
<div style="left:312px;top:327px;width:96px;height:5px;background:linear-gradient(rgba(0,0,0,0.42),rgba(0,0,0,0))"></div>
<div style="left:408px;top:189px;width:5px;height:138px;background:linear-gradient(90deg,rgba(0,0,0,0.42),rgba(0,0,0,0))"></div>
<div style="left:408px;top:327px;width:5px;height:5px;background:radial-gradient(circle at 0 0,rgba(0,0,0,0.42),rgba(0,0,0,0) 5px)"></div>
<div style="left:307px;top:184px;width:101px;height:143px;background:#d3d3d3"></div>
<div style="left:310px;top:186px;width:94px;height:19px;background:#dadada"></div>
<span style="left:332px;top:190px;font-size:12px;line-height:12px;color:#000;">Add</span>
<svg style="left:395px;top:192px" width="6" height="9"><path d="M0 0 L5 4 L0 8 Z" fill="#000"/></svg>
<div style="left:310px;top:206px;width:94px;height:19px;background:#7f7f7f"></div>
<span style="left:332px;top:210px;font-size:12px;line-height:12px;color:#fff;">Edit</span>
<svg style="left:395px;top:212px" width="6" height="9"><path d="M0 0 L5 4 L0 8 Z" fill="#000"/></svg>
<div style="left:310px;top:226px;width:94px;height:19px;background:#dadada"></div>
<span style="left:332px;top:230px;font-size:12px;line-height:12px;color:#000;">Select</span>
<svg style="left:395px;top:232px" width="6" height="9"><path d="M0 0 L5 4 L0 8 Z" fill="#000"/></svg>
<div style="left:310px;top:246px;width:94px;height:19px;background:#dadada"></div>
<span style="left:332px;top:250px;font-size:12px;line-height:12px;color:#000;">Transform</span>
<svg style="left:395px;top:252px" width="6" height="9"><path d="M0 0 L5 4 L0 8 Z" fill="#000"/></svg>
<div style="left:310px;top:266px;width:94px;height:19px;background:#dadada"></div>
<span style="left:332px;top:270px;font-size:12px;line-height:12px;color:#000;">Mesh</span>
<svg style="left:395px;top:272px" width="6" height="9"><path d="M0 0 L5 4 L0 8 Z" fill="#000"/></svg>
<div style="left:310px;top:286px;width:94px;height:19px;background:#dadada"></div>
<span style="left:332px;top:290px;font-size:12px;line-height:12px;color:#000;">View</span>
<svg style="left:395px;top:292px" width="6" height="9"><path d="M0 0 L5 4 L0 8 Z" fill="#000"/></svg>
<div style="left:310px;top:306px;width:94px;height:19px;background:#dadada"></div>
<span style="left:332px;top:310px;font-size:12px;line-height:12px;color:#000;">Render</span>
<svg style="left:395px;top:312px" width="6" height="9"><path d="M0 0 L5 4 L0 8 Z" fill="#000"/></svg>
<div style="left:409px;top:416px;width:155px;height:5px;background:linear-gradient(rgba(0,0,0,0.42),rgba(0,0,0,0))"></div>
<div style="left:564px;top:210px;width:5px;height:206px;background:linear-gradient(90deg,rgba(0,0,0,0.42),rgba(0,0,0,0))"></div>
<div style="left:564px;top:416px;width:5px;height:5px;background:radial-gradient(circle at 0 0,rgba(0,0,0,0.42),rgba(0,0,0,0) 5px)"></div>
<div style="left:404px;top:205px;width:160px;height:211px;background:#d3d3d3"></div>
<div style="left:405px;top:206px;width:159px;height:19px;background:#dadada"></div>
<span style="left:426px;top:210px;font-size:12px;line-height:12px;color:#000;">Exit Editmode</span>
<span style="right:464px;top:210px;font-size:12px;line-height:12px;color:#000;">Tab</span>
<div style="left:405px;top:226px;width:159px;height:19px;background:#dadada"></div>
<span style="left:426px;top:230px;font-size:12px;line-height:12px;color:#000;">Undo</span>
<span style="right:464px;top:230px;font-size:12px;line-height:12px;color:#000;">U</span>
<div style="left:405px;top:246px;width:159px;height:19px;background:#dadada"></div>
<span style="left:426px;top:250px;font-size:12px;line-height:12px;color:#000;">Redo</span>
<span style="right:464px;top:250px;font-size:12px;line-height:12px;color:#000;">Shift U</span>
<div style="left:405px;top:271px;width:159px;height:19px;background:#dadada"></div>
<span style="left:426px;top:276px;font-size:12px;line-height:12px;color:#000;">Extrude</span>
<span style="right:464px;top:276px;font-size:12px;line-height:12px;color:#000;">E</span>
<div style="left:405px;top:291px;width:159px;height:19px;background:#dadada"></div>
<span style="left:426px;top:296px;font-size:12px;line-height:12px;color:#000;">Duplicate</span>
<span style="right:464px;top:296px;font-size:12px;line-height:12px;color:#000;">Shift D</span>
<div style="left:405px;top:311px;width:159px;height:19px;background:#dadada"></div>
<span style="left:426px;top:316px;font-size:12px;line-height:12px;color:#000;">Delete...</span>
<span style="right:464px;top:316px;font-size:12px;line-height:12px;color:#000;">X</span>
<div style="left:405px;top:337px;width:156px;height:19px;background:#7f7f7f"></div>
<span style="left:426px;top:342px;font-size:12px;line-height:12px;color:#fff;">Vertices</span>
<svg style="left:554px;top:344px" width="6" height="9"><path d="M0 0 L5 4 L0 8 Z" fill="#000"/></svg>
<div style="left:405px;top:357px;width:156px;height:19px;background:#dadada"></div>
<span style="left:426px;top:362px;font-size:12px;line-height:12px;color:#000;">Edges</span>
<svg style="left:554px;top:364px" width="6" height="9"><path d="M0 0 L5 4 L0 8 Z" fill="#000"/></svg>
<div style="left:405px;top:377px;width:156px;height:19px;background:#dadada"></div>
<span style="left:426px;top:382px;font-size:12px;line-height:12px;color:#000;">Faces</span>
<svg style="left:554px;top:384px" width="6" height="9"><path d="M0 0 L5 4 L0 8 Z" fill="#000"/></svg>
<div style="left:405px;top:397px;width:156px;height:19px;background:#dadada"></div>
<span style="left:426px;top:402px;font-size:12px;line-height:12px;color:#000;">Normals</span>
<svg style="left:554px;top:404px" width="6" height="9"><path d="M0 0 L5 4 L0 8 Z" fill="#000"/></svg>
<div style="left:566px;top:508px;width:201px;height:5px;background:linear-gradient(rgba(0,0,0,0.42),rgba(0,0,0,0))"></div>
<div style="left:767px;top:342px;width:5px;height:166px;background:linear-gradient(90deg,rgba(0,0,0,0.42),rgba(0,0,0,0))"></div>
<div style="left:767px;top:508px;width:5px;height:5px;background:radial-gradient(circle at 0 0,rgba(0,0,0,0.42),rgba(0,0,0,0) 5px)"></div>
<div style="left:561px;top:337px;width:206px;height:171px;background:#d3d3d3"></div>
<div style="left:562px;top:337px;width:204px;height:19px;background:#dadada"></div>
<span style="left:583px;top:342px;font-size:12px;line-height:12px;color:#000;">Merge...</span>
<span style="right:261px;top:342px;font-size:12px;line-height:12px;color:#000;">Alt M</span>
<div style="left:562px;top:357px;width:204px;height:19px;background:#dadada"></div>
<span style="left:583px;top:362px;font-size:12px;line-height:12px;color:#000;">Rip</span>
<span style="right:261px;top:362px;font-size:12px;line-height:12px;color:#000;">V</span>
<div style="left:562px;top:377px;width:204px;height:19px;background:#dadada"></div>
<span style="left:583px;top:382px;font-size:12px;line-height:12px;color:#000;">Split</span>
<span style="right:261px;top:382px;font-size:12px;line-height:12px;color:#000;">Y</span>
<div style="left:562px;top:397px;width:204px;height:19px;background:#dadada"></div>
<span style="left:583px;top:402px;font-size:12px;line-height:12px;color:#000;">Separate</span>
<span style="right:261px;top:402px;font-size:12px;line-height:12px;color:#000;">P</span>
<div style="left:562px;top:423px;width:204px;height:19px;background:#dadada"></div>
<span style="left:583px;top:428px;font-size:12px;line-height:12px;color:#000;">Smooth</span>
<span style="right:261px;top:428px;font-size:12px;line-height:12px;color:#000;">W, Alt 1</span>
<div style="left:562px;top:443px;width:204px;height:19px;background:#7f7f7f"></div>
<span style="left:583px;top:448px;font-size:12px;line-height:12px;color:#fff;">Remove Doubles</span>
<span style="right:261px;top:448px;font-size:12px;line-height:12px;color:#fff;">W, 6</span>
<div style="left:562px;top:469px;width:204px;height:19px;background:#dadada"></div>
<span style="left:583px;top:474px;font-size:12px;line-height:12px;color:#000;">Make Vertex Parent</span>
<span style="right:261px;top:474px;font-size:12px;line-height:12px;color:#000;">Ctrl P</span>
<div style="left:562px;top:489px;width:204px;height:19px;background:#dadada"></div>
<span style="left:583px;top:494px;font-size:12px;line-height:12px;color:#000;">Add Hook</span>
<span style="right:261px;top:494px;font-size:12px;line-height:12px;color:#000;">Ctrl H</span>
<svg style="left:761px;top:508px" width="3" height="194"><path d="M1.5 0V28" stroke="#30d0e0" stroke-width="1"/><path d="M1.5 28V172" stroke="#e8e040" stroke-width="1"/><path d="M1.5 172V192" stroke="#e8e8e8" stroke-width="1"/><path d="M1.5 0V192" stroke="#101070" stroke-width="1" stroke-dasharray="2 2"/></svg>
<svg style="left:842px;top:576px" width="21" height="12"><path d="M1 11 A9.5 9.5 0 0 0 10.5 1.5 A9.5 9.5 0 0 0 20 11 Z" fill="#8c8c8c" stroke="#1a1a1a" stroke-width="1"/></svg>
<svg style="left:0px;top:578px" width="10" height="22"><path d="M0 0.5 A9 9 0 0 0 9 9.5 A9 9 0 0 0 0 18.5 Z" fill="#8c8c8c" stroke="#1a1a1a" stroke-width="1"/></svg>
<svg style="left:0px;top:14px" width="11" height="12"><path d="M0.5 1.5 A10 10 0 0 0 10.5 11.5 L0 11.5 Z" fill="#8c8c8c" stroke="#1a1a1a" stroke-width="1"/></svg>
<svg style="left:1013px;top:14px" width="11" height="12"><path d="M10.5 1.5 A10 10 0 0 1 0.5 11.5 L11 11.5 Z" fill="#8c8c8c" stroke="#1a1a1a" stroke-width="1"/></svg>
<svg style="left:1014px;top:578px" width="10" height="22"><path d="M10 0.5 A9 9 0 0 1 1 9.5 A9 9 0 0 1 10 18.5 Z" fill="#8c8c8c" stroke="#1a1a1a" stroke-width="1"/></svg>
</body></html>
